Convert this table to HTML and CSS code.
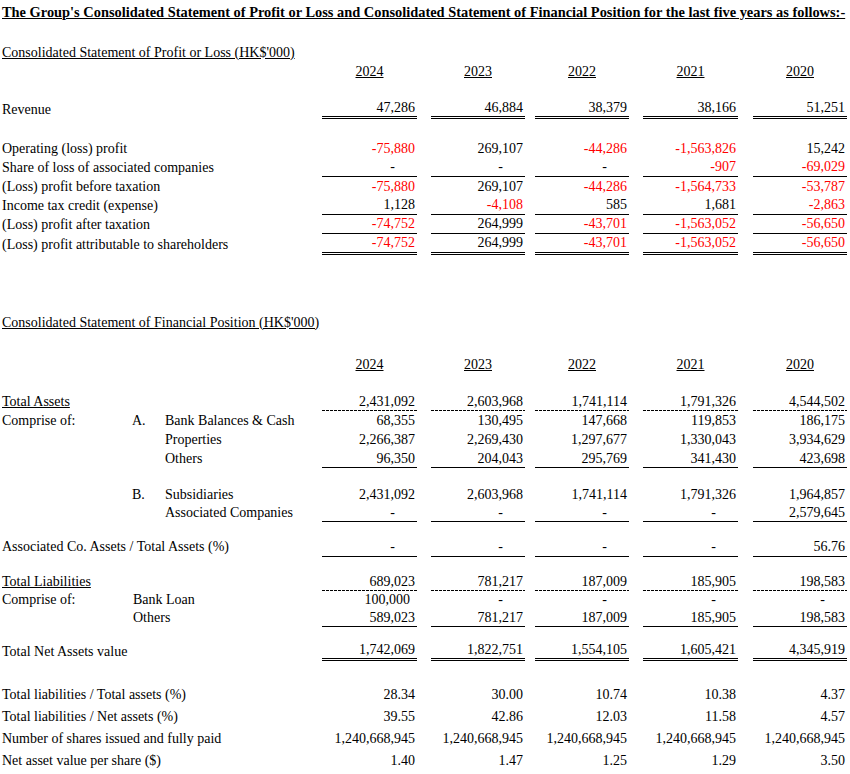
FILE: index.html
```html
<!DOCTYPE html>
<html>
<head>
<meta charset="utf-8">
<link rel="stylesheet" href="styles.css">
</head>
<body>
<div class="page">
  <div class="row h24"><div class="lab title">The Group's Consolidated Statement of Profit or Loss and Consolidated Statement of Financial Position for the last five years as follows:-</div></div>

  <div class="row h19 mt19"><div class="lab u">Consolidated Statement of Profit or Loss (HK$'000)</div></div>
  <div class="row h19">
    <div class="c c1 yr"><span>2024</span></div><div class="c c2 yr"><span>2023</span></div><div class="c c3 yr"><span>2022</span></div><div class="c c4 yr"><span>2021</span></div><div class="c c5 yr"><span>2020</span></div>
  </div>

  <div class="row h19 mt19">
    <div class="lab">Revenue</div>
    <div class="c c1 dbl">47,286</div><div class="c c2 dbl">46,884</div><div class="c c3 dbl">38,379</div><div class="c c4 dbl">38,166</div><div class="c c5 dbl">51,251</div>
  </div>

  <div class="row h19 mt20">
    <div class="lab">Operating (loss) profit</div>
    <div class="c c1 neg">-75,880</div><div class="c c2">269,107</div><div class="c c3 neg">-44,286</div><div class="c c4 neg">-1,563,826</div><div class="c c5">15,242</div>
  </div>
  <div class="row h19">
    <div class="lab">Share of loss of associated companies</div>
    <div class="c c1 sol dash">-</div><div class="c c2 sol dash">-</div><div class="c c3 sol dash">-</div><div class="c c4 sol neg">-907</div><div class="c c5 sol neg">-69,029</div>
  </div>
  <div class="row h19">
    <div class="lab">(Loss) profit before taxation</div>
    <div class="c c1 neg">-75,880</div><div class="c c2">269,107</div><div class="c c3 neg">-44,286</div><div class="c c4 neg">-1,564,733</div><div class="c c5 neg">-53,787</div>
  </div>
  <div class="row h19">
    <div class="lab">Income tax credit (expense)</div>
    <div class="c c1 sol">1,128</div><div class="c c2 sol neg">-4,108</div><div class="c c3 sol">585</div><div class="c c4 sol">1,681</div><div class="c c5 sol neg">-2,863</div>
  </div>
  <div class="row h19">
    <div class="lab">(Loss) profit after taxation</div>
    <div class="c c1 sol neg">-74,752</div><div class="c c2 sol">264,999</div><div class="c c3 sol neg">-43,701</div><div class="c c4 sol neg">-1,563,052</div><div class="c c5 sol neg">-56,650</div>
  </div>
  <div class="row h21">
    <div class="lab">(Loss) profit attributable to shareholders</div>
    <div class="c c1 dbl neg">-74,752</div><div class="c c2 dbl">264,999</div><div class="c c3 dbl neg">-43,701</div><div class="c c4 dbl neg">-1,563,052</div><div class="c c5 dbl neg">-56,650</div>
  </div>

  <div class="row h19 mt58"><div class="lab u">Consolidated Statement of Financial Position (HK$'000)</div></div>
  <div class="row h19 mt23">
    <div class="c c1 yr"><span>2024</span></div><div class="c c2 yr"><span>2023</span></div><div class="c c3 yr"><span>2022</span></div><div class="c c4 yr"><span>2021</span></div><div class="c c5 yr"><span>2020</span></div>
  </div>

  <div class="row h18 mt19">
    <div class="lab u">Total Assets</div>
    <div class="c c1 dsh">2,431,092</div><div class="c c2 dsh">2,603,968</div><div class="c c3 dsh">1,741,114</div><div class="c c4 dsh">1,791,326</div><div class="c c5 dsh">4,544,502</div>
  </div>
  <div class="row h19">
    <div class="l1">Comprise of:</div><div class="l2">A.</div><div class="l3">Bank Balances &amp; Cash</div>
    <div class="c c1">68,355</div><div class="c c2">130,495</div><div class="c c3">147,668</div><div class="c c4">119,853</div><div class="c c5">186,175</div>
  </div>
  <div class="row h20">
    <div class="l3">Properties</div>
    <div class="c c1">2,266,387</div><div class="c c2">2,269,430</div><div class="c c3">1,297,677</div><div class="c c4">1,330,043</div><div class="c c5">3,934,629</div>
  </div>
  <div class="row h18">
    <div class="l3">Others</div>
    <div class="c c1 sol">96,350</div><div class="c c2 sol">204,043</div><div class="c c3 sol">295,769</div><div class="c c4 sol">341,430</div><div class="c c5 sol">423,698</div>
  </div>

  <div class="row h19 mt17">
    <div class="l2">B.</div><div class="l3">Subsidiaries</div>
    <div class="c c1">2,431,092</div><div class="c c2">2,603,968</div><div class="c c3">1,741,114</div><div class="c c4">1,791,326</div><div class="c c5">1,964,857</div>
  </div>
  <div class="row h18">
    <div class="l3">Associated Companies</div>
    <div class="c c1 sol dash">-</div><div class="c c2 sol dash">-</div><div class="c c3 sol dash">-</div><div class="c c4 sol dash">-</div><div class="c c5 sol">2,579,645</div>
  </div>

  <div class="row h20 mt15">
    <div class="lab">Associated Co. Assets / Total Assets (%)</div>
    <div class="c c1 sol dash">-</div><div class="c c2 sol dash">-</div><div class="c c3 sol dash">-</div><div class="c c4 sol dash">-</div><div class="c c5 sol">56.76</div>
  </div>

  <div class="row h19 mt15">
    <div class="lab u">Total Liabilities</div>
    <div class="c c1 dsh">689,023</div><div class="c c2 dsh">781,217</div><div class="c c3 dsh">187,009</div><div class="c c4 dsh">185,905</div><div class="c c5 dsh">198,583</div>
  </div>
  <div class="row h18">
    <div class="l1">Comprise of:</div><div class="l23">Bank Loan</div>
    <div class="c c1 loan">100,000</div><div class="c c2 dash">-</div><div class="c c3 dash">-</div><div class="c c4 dash">-</div><div class="c c5 dash">-</div>
  </div>
  <div class="row h18">
    <div class="l23">Others</div>
    <div class="c c1 sol">589,023</div><div class="c c2 sol">781,217</div><div class="c c3 sol">187,009</div><div class="c c4 sol">185,905</div><div class="c c5 sol">198,583</div>
  </div>

  <div class="row h19 mt15">
    <div class="lab">Total Net Assets value</div>
    <div class="c c1 dbl">1,742,069</div><div class="c c2 dbl">1,822,751</div><div class="c c3 dbl">1,554,105</div><div class="c c4 dbl">1,605,421</div><div class="c c5 dbl">4,345,919</div>
  </div>

  <div class="row h21 mt23">
    <div class="lab">Total liabilities / Total assets (%)</div>
    <div class="c c1">28.34</div><div class="c c2">30.00</div><div class="c c3">10.74</div><div class="c c4">10.38</div><div class="c c5">4.37</div>
  </div>
  <div class="row h23">
    <div class="lab">Total liabilities / Net assets (%)</div>
    <div class="c c1">39.55</div><div class="c c2">42.86</div><div class="c c3">12.03</div><div class="c c4">11.58</div><div class="c c5">4.57</div>
  </div>
  <div class="row h22">
    <div class="lab">Number of shares issued and fully paid</div>
    <div class="c c1">1,240,668,945</div><div class="c c2">1,240,668,945</div><div class="c c3">1,240,668,945</div><div class="c c4">1,240,668,945</div><div class="c c5">1,240,668,945</div>
  </div>
  <div class="row h22">
    <div class="lab">Net asset value per share ($)</div>
    <div class="c c1">1.40</div><div class="c c2">1.47</div><div class="c c3">1.25</div><div class="c c4">1.29</div><div class="c c5">3.50</div>
  </div>
</div>
</body>
</html>
```
FILE: styles.css
```css
html, body {
  margin: 0;
  padding: 0;
  background: #fff;
}
body {
  font-family: "Liberation Serif", "Times New Roman", serif;
  font-size: 14px;
  color: #000;
}
.page {
  width: 850px;
}
.row {
  display: grid;
  grid-template-columns: 131px 34px 157px 95px 14px 94px 10px 94px 14px 95px 15px 94px;
  grid-template-rows: 100%;
}
.row > div {
  box-sizing: border-box;
  display: flex;
  align-items: center;
  white-space: nowrap;
  min-width: 0;
}
.h18 { height: 18px; }
.h19 { height: 19px; }
.h20 { height: 20px; }
.h21 { height: 21px; }
.h22 { height: 22px; }
.h23 { height: 23px; }
.h24 { height: 24px; }
.mt15 { margin-top: 15px; }
.mt17 { margin-top: 17px; }
.mt18 { margin-top: 18px; }
.mt19 { margin-top: 19px; }
.mt20 { margin-top: 20px; }
.mt23 { margin-top: 23px; }
.mt58 { margin-top: 58px; }

.lab { grid-column: 1 / 4; padding-left: 2px; }
.l1 { grid-column: 1; padding-left: 2px; }
.l2 { grid-column: 2; padding-left: 1px; }
.l3 { grid-column: 3; }
.l23 { grid-column: 2 / 4; padding-left: 2px; }

.title {
  font-weight: bold;
  font-size: 14.4px;
  text-decoration: underline;
  grid-column: 1 / -1;
}
.u { text-decoration: underline; }

.c {
  justify-content: flex-end;
  padding-right: 2px;
}
.c1 { grid-column: 4; }
.c2 { grid-column: 6; }
.c3 { grid-column: 8; }
.c4 { grid-column: 10; }
.c5 { grid-column: 12; }

.yr { justify-content: center; padding-right: 0; }
.yr span { text-decoration: underline; }

.neg { color: #f00; }
.dash { padding-right: 22px; }
.loan { padding-right: 7px; }

.sol { border-bottom: 1px solid #000; }
.dbl { border-bottom: 3px double #000; }
.dsh {
  background: repeating-linear-gradient(to right, #000 0 3px, transparent 3px 4px) left bottom / 100% 1px no-repeat;
}
```
